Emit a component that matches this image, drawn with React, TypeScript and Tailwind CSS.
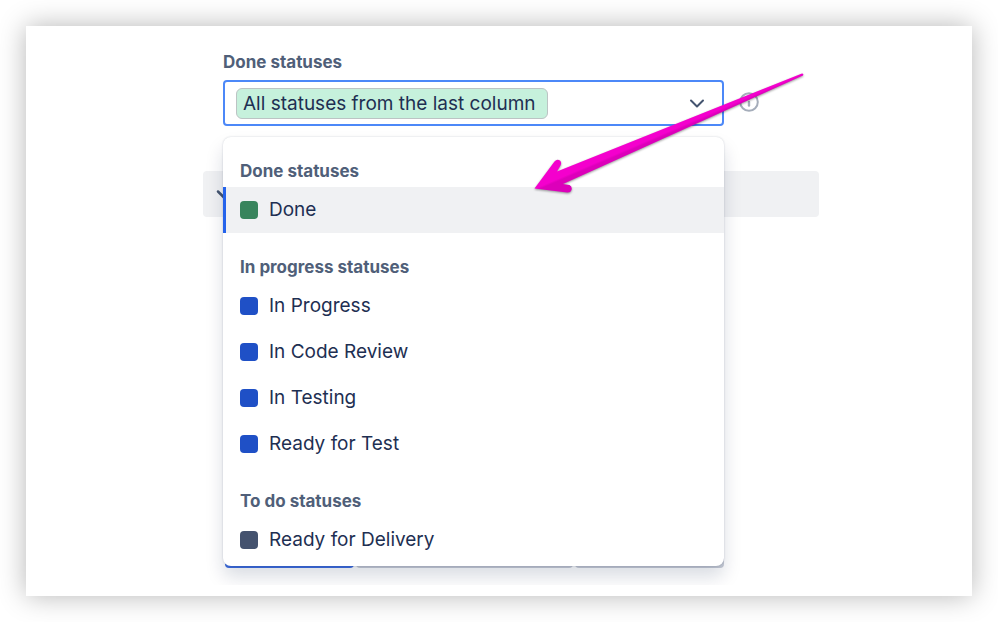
import { useState } from 'react';

type Status = { name: string; color: string };
type StatusGroup = { title: string; statuses: Status[] };

const groups: StatusGroup[] = [
  {
    title: 'Done statuses',
    statuses: [{ name: 'Done', color: 'bg-[#38845c]' }],
  },
  {
    title: 'In progress statuses',
    statuses: [
      { name: 'In Progress', color: 'bg-[#1f50c6]' },
      { name: 'In Code Review', color: 'bg-[#1f50c6]' },
      { name: 'In Testing', color: 'bg-[#1f50c6]' },
      { name: 'Ready for Test', color: 'bg-[#1f50c6]' },
    ],
  },
  {
    title: 'To do statuses',
    statuses: [{ name: 'Ready for Delivery', color: 'bg-[#44526e]' }],
  },
];

const StatusMenu = ({ active, onSelect }: { active: string; onSelect: (name: string) => void }) => (
  <div className="absolute inset-x-0 top-full z-10 mt-[11px] rounded-lg bg-white pt-[18px] pb-[3px] shadow-[0_0_2px_rgba(9,30,66,0.2),0_11px_18px_rgba(9,30,66,0.15)]">
    {groups.map((group) => (
      <div key={group.title} className="mb-[18px] last:mb-0">
        <h3 className="px-[17px] py-1 text-[17px] leading-6 font-bold text-[#505f79]">{group.title}</h3>
        <ul>
          {group.statuses.map((status) => (
            <li key={status.name}>
              <button
                type="button"
                onClick={() => onSelect(status.name)}
                className={`flex h-[46px] w-full items-center gap-[11px] border-l-3 px-[14px] text-left text-[19px] text-[#1e2f52] ${
                  status.name === active ? 'border-[#2563eb] bg-[#f0f1f3]' : 'border-transparent'
                }`}
              >
                <span className={`size-[18px] rounded ${status.color}`} />
                {status.name}
              </button>
            </li>
          ))}
        </ul>
      </div>
    ))}
  </div>
);

const PointerArrow = () => (
  <svg
    className="pointer-events-none absolute -top-3 left-[305px] z-20 h-[130px] w-[280px] drop-shadow-[0_1px_1px_rgba(0,0,0,0.4)]"
    viewBox="528 68 280 130"
    aria-hidden="true"
  >
    <defs>
      <linearGradient id="arrow-fill" gradientUnits="userSpaceOnUse" x1="652" y1="131" x2="658" y2="145">
        <stop offset="0.45" stopColor="#f400cd" />
        <stop offset="0.6" stopColor="#dc00ba" />
      </linearGradient>
    </defs>
    <path
      d="M534.5 188.5 L554.5 161.5 Q557 158.500 560 160.500 Q562 162.500 560.500 165.500 L557 171.500 L802 73.500 Q804 73.500 803 75.500 L563 184 L569.500 185 Q572.500 186.500 571.500 190 Q570.500 193 567 192.500 Z"
      fill="url(#arrow-fill)"
    />
  </svg>
);

export default function App() {
  const [open, setOpen] = useState(true);
  const [active, setActive] = useState('Done');

  return (
    <main className="min-h-screen bg-white p-[26px] font-[Inter,'Liberation_Sans',sans-serif]">
      <section className="bg-white pb-[11px] shadow-[0_0_26px_rgba(0,0,0,0.29)]">
        <div className="overflow-hidden pt-6 pr-[153px] pb-[17px] pl-[177px]">
          <div className="mr-[95px] ml-5">
            <label htmlFor="done-statuses" className="block pb-1.5 text-[17px] leading-6 font-bold text-[#505f79]">
              Done statuses
            </label>
            <div className="relative">
              <button
                id="done-statuses"
                type="button"
                aria-expanded={open}
                onClick={() => setOpen(!open)}
                className="flex h-[46px] w-full items-center justify-between rounded border-2 border-[#4c88f8] bg-white pr-4 pl-[11px]"
              >
                <span className="min-w-[312px] rounded-md border border-[#bcc4c4] bg-[#c6f1dc] px-1.5 text-left text-[19px] leading-[29px] text-[#1e2f52]">
                  All statuses from the last column
                </span>
                <svg className="size-[18px]" viewBox="0 0 18 18" fill="none" aria-hidden="true">
                  <path d="M3 6.500 L9 12.500 L15 6.500" stroke="#44546f" strokeWidth="2" strokeLinecap="round" strokeLinejoin="round" />
                </svg>
              </button>
              <button
                type="button"
                aria-label="About done statuses"
                className="absolute top-3 left-full ml-[15px]"
              >
                <svg className="size-5" viewBox="0 0 20 20" fill="none" aria-hidden="true">
                  <circle cx="10" cy="10" r="8.800" stroke="#a5adba" strokeWidth="2" />
                  <path d="M10 10 V13.500" stroke="#a5adba" strokeWidth="2.400" strokeLinecap="round" />
                  <circle cx="10" cy="6.200" r="1.300" fill="#a5adba" />
                </svg>
              </button>
              {open && <StatusMenu active={active} onSelect={setActive} />}
              <PointerArrow />
            </div>
          </div>

          <button type="button" aria-label="Expand section" className="mt-[45px] flex h-[46px] w-full items-center rounded bg-[#f0f1f3] pl-3">
            <svg className="size-[18px]" viewBox="0 0 18 18" fill="none" aria-hidden="true">
              <path d="M3 6.500 L9 12.500 L15 6.500" stroke="#44546f" strokeWidth="2.500" strokeLinecap="round" strokeLinejoin="round" />
            </svg>
          </button>

          {/* Footer actions, tucked under the open menu */}
          <div className="mt-[305px] mr-[95px] ml-[22px] flex gap-0.5">
            <button type="button" aria-label="Save" className="h-[46px] w-[129px] rounded bg-[#3f6de0]" />
            <button type="button" aria-label="Reset" className="h-[46px] w-[217px] rounded bg-[#c8ccd6]" />
            <button type="button" aria-label="Cancel" className="h-[46px] flex-1 rounded bg-[#c8ccd6]" />
          </div>
        </div>
      </section>
    </main>
  );
}
